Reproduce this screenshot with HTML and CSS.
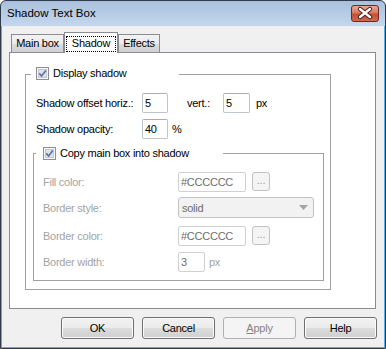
FILE: index.html
```html
<!DOCTYPE html>
<html lang="en">
<head>
  <meta charset="UTF-8" />
  <title>Shadow Text Box</title>
  <link rel="stylesheet" href="styles.css">
</head>
<body>
  <div class="window">
    <div class="titlebar">
      <span class="title">Shadow Text Box</span>
      <div class="close">
        <svg width="26" height="15" viewBox="0 0 26 15">
          <path d="M8 3 L18 11 M18 3 L8 11" stroke="#4a1a12" stroke-width="4.2" stroke-linecap="round" fill="none"/>
          <path d="M8 3 L18 11 M18 3 L8 11" stroke="#ffffff" stroke-width="2.4" stroke-linecap="round" fill="none"/>
        </svg>
      </div>
    </div>

    <div class="client">
      <div class="tabs">
        <div class="tab main-tab">Main box</div>
        <div class="tab active"><span class="focus">Shadow</span></div>
        <div class="tab effects-tab">Effects</div>
      </div>

      <div class="panel">
        <div class="group outer">
          <div class="legend">
            <svg class="check" width="13" height="13" viewBox="0 0 13 13">
              <rect x="0.5" y="0.5" width="12" height="12" fill="#f6f6f6" stroke="#8e8f8f"/>
              <rect x="2.5" y="2.5" width="8" height="8" fill="#dfe2e8" stroke="#c4c8cf"/>
              <path d="M3.2 6.4 L5.6 9 L9.8 3.4" fill="none" stroke="#5d72a8" stroke-width="1.7"/>
            </svg>
            <span>Display shadow</span>
          </div>

          <div class="row r1">
            <span class="label wide">Shadow offset horiz.:</span>
            <div class="field w26">5</div>
            <span class="label vert">vert.:</span>
            <div class="field w27">5</div>
            <span class="unit">px</span>
          </div>

          <div class="row r2">
            <span class="label wide">Shadow opacity:</span>
            <div class="field w26">40</div>
            <span class="unit pct">%</span>
          </div>

          <div class="group inner">
            <div class="legend">
              <svg class="check" width="13" height="13" viewBox="0 0 13 13">
                <rect x="0.5" y="0.5" width="12" height="12" fill="#f6f6f6" stroke="#8e8f8f"/>
                <rect x="2.5" y="2.5" width="8" height="8" fill="#dfe2e8" stroke="#c4c8cf"/>
                <path d="M3.2 6.4 L5.6 9 L9.8 3.4" fill="none" stroke="#5d72a8" stroke-width="1.7"/>
              </svg>
              <span>Copy main box into shadow</span>
            </div>

            <div class="row d1">
              <span class="label dim">Fill color:</span>
              <div class="field off w68">#CCCCCC</div>
              <div class="dots">...</div>
            </div>

            <div class="row d2">
              <span class="label dim">Border style:</span>
              <div class="select">
                <span>solid</span>
                <svg width="9" height="5" viewBox="0 0 9 5"><path d="M0 0 H9 L4.5 5 Z" fill="#a5a5a5"/></svg>
              </div>
            </div>

            <div class="row d3">
              <span class="label dim">Border color:</span>
              <div class="field off w68">#CCCCCC</div>
              <div class="dots">...</div>
            </div>

            <div class="row d4">
              <span class="label dim">Border width:</span>
              <div class="field off w27">3</div>
              <span class="unit dim">px</span>
            </div>
          </div>
        </div>
      </div>

      <div class="buttons">
        <div class="btn">OK</div>
        <div class="btn">Cancel</div>
        <div class="btn disabled"><u>A</u>pply</div>
        <div class="btn">Help</div>
      </div>
    </div>
  </div>
</body>
</html>
```

FILE: styles.css
```css
body {
  margin: 0;
  font-family: "Liberation Sans", Arial, sans-serif;
  font-size: 11px;
  color: #000;
}
.window {
  width: 386px;
  height: 349px;
  box-sizing: border-box;
  border: 1px solid #2f3a4a;
  border-radius: 6px 6px 0 0;
  background: linear-gradient(#a9c0dc, #c4d7ed 25px);
  display: flex;
  flex-direction: column;
}
.titlebar {
  height: 25px;
  display: flex;
  justify-content: space-between;
  align-items: flex-start;
}
.title {
  font-size: 11.5px;
  line-height: 13px;
  margin: 6px 0 0 6px;
}
.close {
  width: 28px;
  height: 17px;
  box-sizing: border-box;
  margin: 4px 6px 0 0;
  border: 1px solid #6b2a20;
  border-radius: 3px;
  background: linear-gradient(#eaa797, #d77a64 45%, #c5502f 55%, #d0694f);
  display: flex;
  align-items: center;
  justify-content: center;
}
.client {
  flex: 1;
  background: #f0f0f0;
  border: 1px solid #5dade2;
  border-top: none;
  padding: 6px 7px 0 7px;
}
.tabs {
  display: flex;
  align-items: flex-end;
  height: 20px;
}
.tab {
  box-sizing: border-box;
  height: 18px;
  border: 1px solid #898c95;
  border-bottom: none;
  background: linear-gradient(#f3f3f3, #ebebeb 50%, #dddddd 50%, #d0d0d0);
  display: flex;
  justify-content: center;
  padding-top: 2px;
  line-height: 13px;
  letter-spacing: -0.25px;
}
.main-tab {
  width: 53px;
  margin-left: 2px;
}
.effects-tab {
  width: 42px;
}
.tab.active {
  width: 54px;
  height: 21px;
  margin-bottom: -1px;
  background: #fff;
  position: relative;
  z-index: 1;
  padding-top: 3px;
}
.focus {
  box-sizing: border-box;
  width: 50px;
  height: 16px;
  border: 1px dotted #000;
  text-align: center;
  line-height: 13px;
}
.panel {
  box-sizing: border-box;
  width: 367px;
  height: 257px;
  border: 1px solid #898c95;
  background: #fff;
  padding-top: 21px;
}
.group {
  box-sizing: border-box;
  border: 1px solid #a0a0a0;
}
.outer {
  width: 306px;
  height: 216px;
  margin-left: 15px;
}
.inner {
  width: 291px;
  height: 128px;
  margin: 14px 0 0 7px;
}
.legend {
  box-sizing: border-box;
  display: flex;
  align-items: center;
  height: 14px;
  background: #fff;
  letter-spacing: -0.25px;
}
.outer > .legend {
  width: 148px;
  margin: -9px 0 0 5px;
  padding-left: 5px;
}
.inner > .legend {
  width: 187px;
  margin: -8px 0 0 2px;
  padding-left: 7px;
}
.check {
  flex: none;
  margin-right: 4px;
}
.row {
  display: flex;
  align-items: center;
  height: 20px;
  letter-spacing: -0.25px;
}
.r1 { margin: 13px 0 0 10px; }
.r2 { margin: 6px 0 0 10px; }
.d1 { margin: 12px 0 0 9px; }
.d2 { margin: 5px 0 0 9px; height: 21px; }
.d3 { margin: 8px 0 0 9px; }
.d4 { margin: 6px 0 0 9px; }
.label.wide { width: 106px; }
.label.vert { width: 36px; margin-left: 19px; }
.label.dim { width: 135px; }
.dim { color: #a3a3a3; }
.unit { margin-left: 6px; }
.unit.pct { margin-left: 4px; }
.d4 .unit { margin-left: 4px; }
.field {
  box-sizing: border-box;
  height: 20px;
  border: 1px solid #bfc5cc;
  border-top-color: #abadb3;
  border-radius: 2px;
  background: #fff;
  padding-left: 2px;
  line-height: 18px;
}
.field.off {
  border-color: #d0d0d0;
  color: #6d6d6d;
}
.w26 { width: 26px; }
.w27 { width: 27px; }
.w68 { width: 68px; }
.dots {
  box-sizing: border-box;
  width: 18px;
  height: 19px;
  align-self: flex-start;
  margin-left: 6px;
  border: 1px solid #c2c2c2;
  border-radius: 3px;
  background: #f4f4f4;
  color: #a0a0a0;
  text-align: center;
  line-height: 15px;
}
.select {
  box-sizing: border-box;
  width: 136px;
  height: 21px;
  border: 1px solid #c2c2c2;
  border-radius: 3px;
  background: #f2f2f2;
  color: #6d6d6d;
  display: flex;
  align-items: center;
  justify-content: space-between;
  padding: 0 5px 0 3px;
}
.buttons {
  display: flex;
  justify-content: flex-end;
  gap: 8px;
  margin-top: 8px;
}
.btn {
  box-sizing: border-box;
  width: 73px;
  height: 22px;
  border: 1px solid #707070;
  border-radius: 3px;
  background: linear-gradient(#f2f2f2, #ebebeb 50%, #dddddd 50%, #cfcfcf);
  box-shadow: inset 0 0 0 1px #fbfbfb;
  text-align: center;
  line-height: 20px;
  letter-spacing: -0.25px;
}
.btn.disabled {
  border-color: #adb2b5;
  background: #f4f4f4;
  box-shadow: none;
  color: #838383;
}
```
